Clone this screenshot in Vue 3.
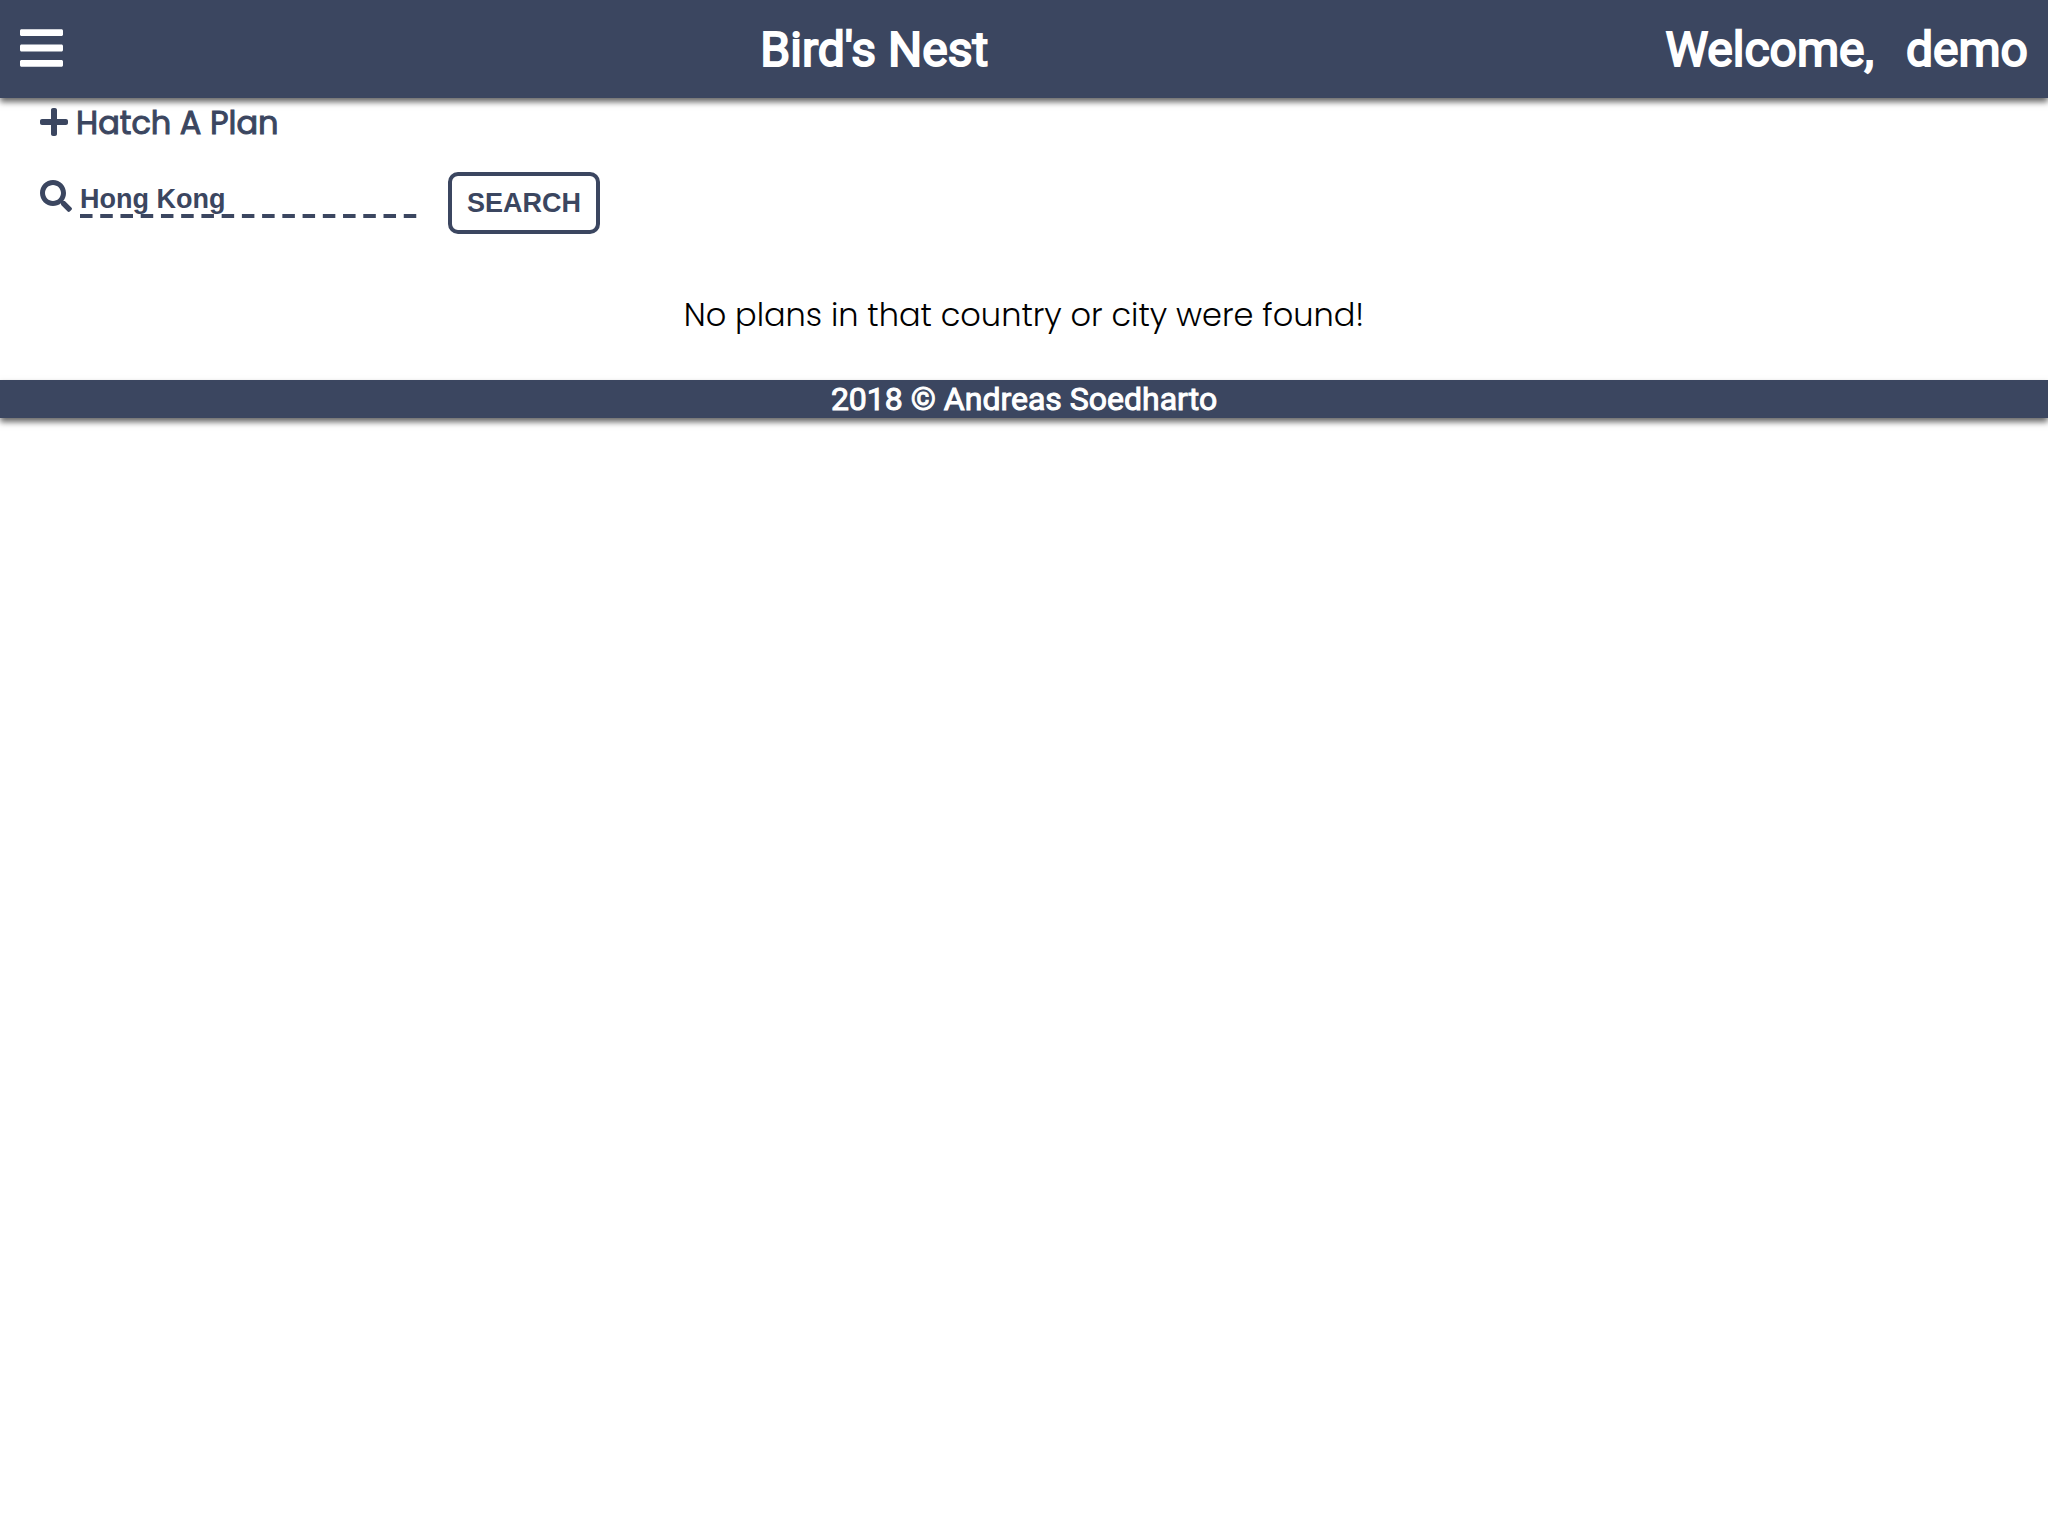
<script setup>
import { ref } from 'vue'

const query = ref('Hong Kong')
</script>

<template>
  <div class="page">
    <header class="bar">
      <button class="menu" type="button" aria-label="Menu">
        <svg viewBox="0 0 448 512" aria-hidden="true"><path d="M16 132h416c8.837 0 16-7.163 16-16V76c0-8.837-7.163-16-16-16H16C7.163 60 0 67.163 0 76v40c0 8.837 7.163 16 16 16zm0 160h416c8.837 0 16-7.163 16-16v-40c0-8.837-7.163-16-16-16H16c-8.837 0-16 7.163-16 16v40c0 8.837 7.163 16 16 16zm0 160h416c8.837 0 16-7.163 16-16v-40c0-8.837-7.163-16-16-16H16c-8.837 0-16 7.163-16 16v40c0 8.837 7.163 16 16 16z" /></svg>
      </button>
      <a class="brand" href="#">Bird's Nest</a>
      <div class="welcome"><span>Welcome,</span><span>demo</span></div>
    </header>
    <main>
      <a class="hatch" href="#">
        <svg viewBox="0 0 448 512" aria-hidden="true"><path d="M416 208H272V64c0-17.67-14.33-32-32-32h-32c-17.67 0-32 14.33-32 32v144H32c-17.67 0-32 14.33-32 32v32c0 17.67 14.33 32 32 32h144v144c0 17.67 14.33 32 32 32h32c17.67 0 32-14.33 32-32V304h144c17.67 0 32-14.33 32-32v-32c0-17.67-14.33-32-32-32z" /></svg>
        <span>Hatch A Plan</span>
      </a>
      <form class="search" @submit.prevent>
        <label for="place" aria-label="Search country or city">
          <svg viewBox="0 0 512 512" aria-hidden="true"><path d="M505 442.7L405.3 343c-4.5-4.5-10.6-7-17-7H372c27.6-35.3 44-79.7 44-128C416 93.1 322.9 0 208 0S0 93.1 0 208s93.1 208 208 208c48.3 0 92.7-16.4 128-44v16.3c0 6.4 2.5 12.5 7 17l99.7 99.7c9.4 9.4 24.6 9.4 33.9 0l28.3-28.3c9.4-9.4 9.4-24.6.1-34zM208 336c-70.7 0-128-57.2-128-128 0-70.7 57.2-128 128-128 70.7 0 128 57.2 128 128 0 70.7-57.2 128-128 128z" /></svg>
        </label>
        <input id="place" v-model="query" type="text">
        <button type="submit">SEARCH</button>
      </form>
      <p class="empty">No plans in that country or city were found!</p>
    </main>
    <footer>2018 © Andreas Soedharto</footer>
  </div>
</template>

<style>
body { margin: 0; background: #fff; }
</style>

<style scoped>
.page {
  min-height: 100vh;
  font-family: Poppins, "Open Sans", sans-serif;
  font-size: 32px;
  color: #000;
}
.bar {
  display: flex;
  align-items: center;
  justify-content: space-between;
  box-sizing: border-box;
  height: 98px;
  padding: 0 20px;
  background: #3b4660;
  box-shadow: 0 4px 6px rgba(0, 0, 0, 0.6);
  color: #fff;
  font: 400 48px Roboto, sans-serif;
  -webkit-text-stroke: 2px #fff;
}
.menu {
  padding: 0 20px 2px 0;
  border: 0;
  background: none;
}
.menu svg {
  display: block;
  width: 43px;
  height: 50px;
  fill: #fff;
}
.brand { color: #fff; text-decoration: none; }
.welcome { display: flex; gap: 32px; }
main { padding: 0 40px 40px; }
.hatch {
  display: flex;
  align-items: center;
  gap: 8px;
  width: fit-content;
  height: 50px;
  color: #3b4660;
  font-weight: 400;
  text-decoration: none;
  -webkit-text-stroke: 1px #3b4660;
}
.hatch svg {
  width: 28px;
  height: 32px;
  padding-bottom: 2px;
  fill: #3b4660;
}
.search {
  display: flex;
  align-items: flex-start;
  margin-top: 24px;
}
.search label { width: 40px; padding-top: 8px; }
.search svg {
  display: block;
  width: 32px;
  height: 32px;
  fill: #3b4660;
}
.search input {
  box-sizing: border-box;
  width: 344px;
  height: 46px;
  margin-right: 24px;
  padding: 12px 0 4px;
  border: 0;
  outline: 0;
  background: linear-gradient(90deg, #3b4660 60%, transparent 60%) left bottom / 20px 4px round no-repeat;
  color: #3b4660;
  font: bold 27px "Liberation Sans", sans-serif;
}
.search button {
  box-sizing: border-box;
  width: 152px;
  height: 62px;
  padding: 0;
  border: 4px solid #3b4660;
  border-radius: 10px;
  background: #fff;
  color: #3b4660;
  font: bold 27px "Liberation Sans", sans-serif;
}
.empty {
  margin: 56px 0 0;
  font-weight: 300;
  line-height: 50px;
  text-align: center;
}
footer {
  height: 38px;
  background: #3b4660;
  box-shadow: 0 4px 6px rgba(0, 0, 0, 0.6);
  color: #fff;
  font: 400 32px/38px Roboto, sans-serif;
  -webkit-text-stroke: 1px #fff;
  text-align: center;
}
</style>
